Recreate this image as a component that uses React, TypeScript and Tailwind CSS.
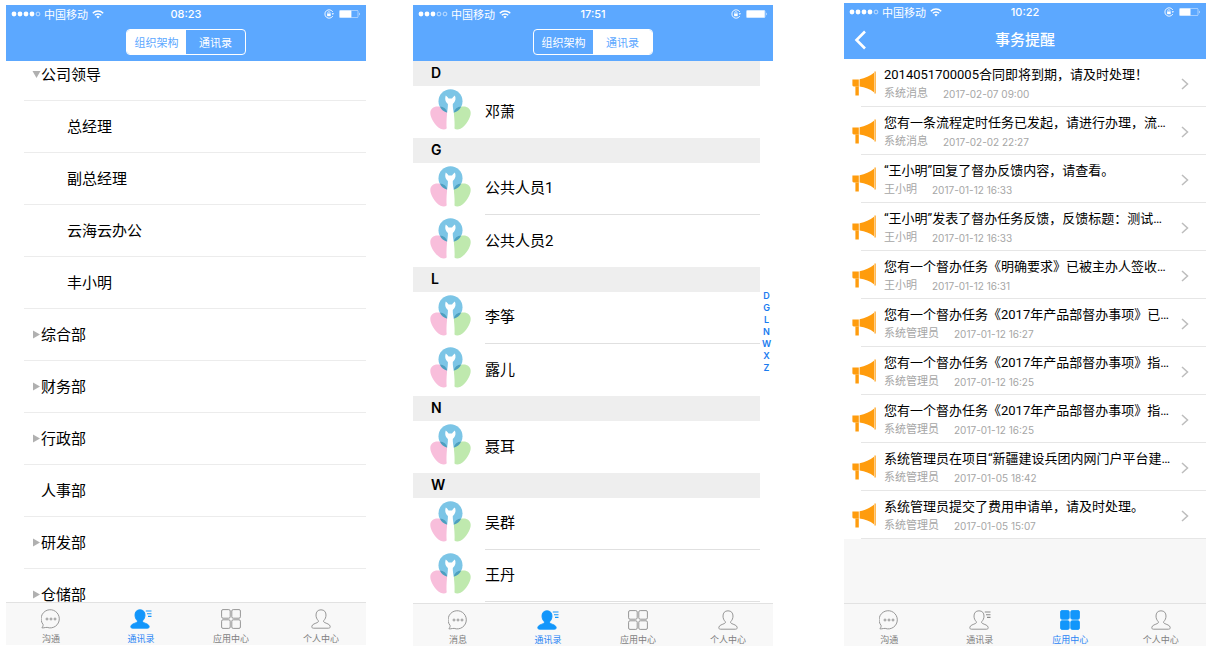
import React from 'react';
import clsx from 'clsx';

type TabId = 'chat' | 'contacts' | 'apps' | 'me';

const departments = [
  { name: '公司领导', kind: 'open' },
  { name: '总经理', kind: 'child' },
  { name: '副总经理', kind: 'child' },
  { name: '云海云办公', kind: 'child' },
  { name: '丰小明', kind: 'child' },
  { name: '综合部', kind: 'closed' },
  { name: '财务部', kind: 'closed' },
  { name: '行政部', kind: 'closed' },
  { name: '人事部', kind: 'leaf' },
  { name: '研发部', kind: 'closed' },
  { name: '仓储部', kind: 'closed' },
];

const contactGroups = [
  { letter: 'D', people: ['邓萧'] },
  { letter: 'G', people: ['公共人员1', '公共人员2'] },
  { letter: 'L', people: ['李筝', '露儿'] },
  { letter: 'N', people: ['聂耳'] },
  { letter: 'W', people: ['吴群', '王丹'] },
];

const indexLetters = ['D', 'G', 'L', 'N', 'W', 'X', 'Z'];

const reminders = [
  { title: '2014051700005合同即将到期，请及时处理！', from: '系统消息', time: '2017-02-07 09:00' },
  { title: '您有一条流程定时任务已发起，请进行办理，流…', from: '系统消息', time: '2017-02-02 22:27' },
  { title: '“王小明”回复了督办反馈内容，请查看。', from: '王小明', time: '2017-01-12 16:33' },
  { title: '“王小明”发表了督办任务反馈，反馈标题：测试…', from: '王小明', time: '2017-01-12 16:33' },
  { title: '您有一个督办任务《明确要求》已被主办人签收…', from: '王小明', time: '2017-01-12 16:31' },
  { title: '您有一个督办任务《2017年产品部督办事项》已…', from: '系统管理员', time: '2017-01-12 16:27' },
  { title: '您有一个督办任务《2017年产品部督办事项》指…', from: '系统管理员', time: '2017-01-12 16:25' },
  { title: '您有一个督办任务《2017年产品部督办事项》指…', from: '系统管理员', time: '2017-01-12 16:25' },
  { title: '系统管理员在项目“新疆建设兵团内网门户平台建…', from: '系统管理员', time: '2017-01-05 18:42' },
  { title: '系统管理员提交了费用申请单，请及时处理。', from: '系统管理员', time: '2017-01-05 15:07' },
];

const StatusBar: React.FC<{ time: string; signal: number; battery: number }> = ({ time, signal, battery }) => (
  <div className="grid h-[18px] grid-cols-[1fr_auto_1fr] items-center pl-[5px] pr-[5px] text-white">
    <div className="flex items-center gap-[2px]">
      <svg width="31" height="6" viewBox="0 0 31 6">
        {[0, 1, 2, 3, 4].map((i) => (
          <circle
            key={i}
            cx={3 + i * 6}
            cy="3"
            r={i < signal ? 2.4 : 1.9}
            fill={i < signal ? '#fff' : 'none'}
            stroke="#fff"
            strokeWidth={i < signal ? 0 : 0.6}
          />
        ))}
      </svg>
      <span className="font-['Noto_Sans_CJK_SC',sans-serif] text-[11px] leading-[18px]">中国移动</span>
      <svg className="ml-[2px]" width="12" height="9" viewBox="0 0 12 9" fill="none" stroke="#fff" strokeWidth="1.5">
        <path d="M0.8 3.2 C3.8 0.2 8.2 0.2 11.2 3.2" />
        <path d="M2.8 5.3 C4.6 3.5 7.4 3.5 9.2 5.3" />
        <path d="M4.3 6.7 C5.3 5.8 6.7 5.8 7.7 6.7 L6 8.6 Z" fill="#fff" stroke="none" />
      </svg>
    </div>
    <span className="font-['Inter','Roboto',sans-serif] text-[11px] font-medium leading-[18px]">{time}</span>
    <div className="flex items-center justify-end gap-[5px]">
      <svg width="10" height="10" viewBox="0 0 10 10" fill="none" stroke="#fff">
        <path d="M8.8 3 A4.2 4.2 0 1 0 8.8 7" strokeWidth="0.9" />
        <path d="M7.6 4.2 L10 4.2 L8.8 6 Z" fill="#fff" stroke="none" />
        <rect x="3.1" y="4.5" width="3.6" height="2.7" fill="#fff" stroke="none" />
        <path d="M3.8 4.6 V3.7 A1.1 1.1 0 0 1 6 3.7 V4.6" strokeWidth="0.7" />
      </svg>
      <svg width="22" height="8" viewBox="0 0 22 8">
        <rect x="0.4" y="0.4" width="18.6" height="7.2" rx="1" fill="none" stroke="#fff" strokeOpacity="0.7" strokeWidth="0.7" />
        <rect x="0.700" y="0.500" width={18 * battery} height="7" rx="0.500" fill="#fff" />
        <path d="M20 2.6 Q21.4 4 20 5.4 Z" fill="#fff" />
      </svg>
    </div>
  </div>
);

const Segmented: React.FC<{ active: number }> = ({ active }) => (
  <div className="flex h-[38px] items-center justify-center">
    <div className="flex h-[26px] w-[120px] overflow-hidden rounded-[4px] border border-white">
      {['组织架构', '通讯录'].map((label, i) => (
        <button
          key={label}
          type="button"
          className={clsx(
            "flex-1 font-['Noto_Sans_CJK_SC',sans-serif] text-[11px] leading-6",
            i === active ? 'bg-white text-[#5ca8ff]' : 'text-white',
          )}
        >
          {label}
        </button>
      ))}
    </div>
  </div>
);

const personPath =
  'M10 0.8 C13.3 0.8 15 3 15 6 C15 8.4 14.1 10.2 12.9 11.4 C12.4 12 12.5 13 13.3 13.4 C15.5 14.5 19.2 15.2 19.2 17.6 C19.2 18.7 18.6 19.2 17.6 19.2 H2.4 C1.4 19.2 0.8 18.7 0.8 17.6 C0.8 15.2 4.5 14.5 6.7 13.4 C7.5 13 7.6 12 7.1 11.4 C5.9 10.2 5 8.4 5 6 C5 3 6.7 0.8 10 0.8 Z';

const TabIcon: React.FC<{ id: TabId; active: boolean }> = ({ id, active }) => {
  const color = active ? '#1296fb' : '#8b8b8b';
  return (
    <svg
      width={id === 'contacts' ? 22 : 20}
      height="20"
      viewBox={id === 'contacts' ? '0 0 22 20' : '0 0 20 20'}
      fill={active ? color : 'none'}
      stroke={color}
      strokeWidth="0.9"
    >
      {id === 'chat' && (
        <>
          <path d="M2.8 18.8 C2 18.9 1.3 18.9 0.9 18.8 C1.8 17.8 2.2 16.7 2.1 15.5 A9.1 9.1 0 1 1 6.2 18.4 C5 18.3 4 18.6 2.8 18.8 Z" />
          <circle cx="6" cy="10" r="1" />
          <circle cx="10" cy="10" r="1" />
          <circle cx="14" cy="10" r="1" />
        </>
      )}
      {id === 'contacts' && (
        <>
          <path d={personPath} />
          <path d="M15.8 2 H21.5 M17 4.7 H21.5 M18 7.4 H21.5" strokeWidth="1.1" />
        </>
      )}
      {id === 'apps' &&
        [0.6, 10.8].map((x) =>
          [0.6, 10.8].map((y) => <rect key={`${x}-${y}`} x={x} y={y} width="8.6" height="8.6" rx="1.4" />),
        )}
      {id === 'me' && <path d={personPath} />}
    </svg>
  );
};

const TabBar: React.FC<{ active: TabId; first?: string }> = ({ active, first = '沟通' }) => {
  const tabs: { id: TabId; label: string }[] = [
    { id: 'chat', label: first },
    { id: 'contacts', label: '通讯录' },
    { id: 'apps', label: '应用中心' },
    { id: 'me', label: '个人中心' },
  ];
  return (
    <nav className="grid h-[43px] shrink-0 grid-cols-4 border-t border-[#e2e2e2] bg-[#f8f8f8]">
      {tabs.map((tab) => (
        <button
          key={tab.id}
          type="button"
          className={clsx(
            'flex flex-col items-center gap-1 pt-[6px] text-[9px] leading-3',
            tab.id === active ? 'text-[#2a85f5]' : 'text-[#7f7f7f]',
          )}
        >
          <TabIcon id={tab.id} active={tab.id === active} />
          <span>{tab.label}</span>
        </button>
      ))}
    </nav>
  );
};

const Avatar = () => (
  <svg className="shrink-0" width="41" height="41" viewBox="0 0 41 41">
    <circle cx="20.5" cy="12.2" r="12" fill="#7cc5e6" />
    <path d="M0.3 24 C0.3 19.5 4 17 8.500 17.500 C14 18 17.500 21 17.500 26 L18 36 C18 40.500 14 41.500 10.500 39.800 C5 36.500 0.300 29 0.300 24 Z" fill="#f8bedb" />
    <path d="M40.700 24 C40.700 19.500 37 17 32.500 17.500 C27 18 23.500 21 23.500 26 L23 36 C23 40.500 27 41.500 30.500 39.800 C36 36.500 40.700 29 40.700 24 Z" fill="#bfe9ae" />
    {/* where the petals cross the ring */}
    <path d="M9.800 17.600 C13.8 18 16.6 20 17.4 23.8 C13.8 22.9 11.200 20.800 9.800 17.600 Z" fill="#4b9fc0" />
    <path d="M31.200 17.600 C27.2 18 24.4 20 23.6 23.8 C27.2 22.9 29.800 20.800 31.200 17.600 Z" fill="#4b9fc0" />
    <path d="M15.8 6.6 C17 7.4 18 8.6 18.6 9.6 H22 C22.600 8.600 23.600 7.400 24.900 6.600 C26.100 9.500 25.700 12.600 22.800 15 C22.600 18 23.400 21 23.900 25 C24.500 30 24.900 36 24.400 40.500 H16.800 C16.200 36 16.500 30 17 25 C17.400 21 18 18 17.900 15 C15 12.600 14.800 9.500 15.800 6.600 Z" fill="#fff" />
  </svg>
);

const Megaphone = () => (
  <svg className="shrink-0" width="24" height="26" viewBox="0 0 24 26" fill="#ff9c0d">
    <path d="M0.4 8.6 H6.8 V15.4 H1.8 C0.9 15.4 0.4 14.9 0.4 14 Z" />
    <path d="M3.4 15.4 H6.8 V24.5 H3.4 Z" />
    <path d="M7.600 8.200 C13 7.200 18 5 22 1.800 V21.2 C18 18.300 13 16.200 7.600 15.600 Z" />
    <path d="M22.5 0.5 H23.7 V22.5 H22.5 Z" />
  </svg>
);

const OrgScreen = () => (
  <section className="mt-[5px] mb-[10px] flex min-w-0 flex-[360] flex-col">
    <header className="shrink-0 bg-[#5ca8ff]">
      <StatusBar time="08:23" signal={4} battery={0.65} />
      <Segmented active={0} />
    </header>
    <div className="min-h-0 flex-1 overflow-hidden">
      {/* list is scrolled a little under the header */}
      <ul className="-mt-3">
        {departments.map((d) => (
          <li
            key={d.name}
            className={clsx(
              'ml-[18px] flex h-[52px] items-center border-b border-[#ececec] text-[15px] leading-5 text-black',
              d.kind === 'child' ? 'pl-[43px]' : 'pl-2',
            )}
          >
            {d.kind !== 'child' && (
              <svg width="9" height="9" viewBox="0 0 9 9" fill="#b0b0b0">
                {d.kind === 'open' && <path d="M0.5 1 H8.5 L4.5 8 Z" />}
                {d.kind === 'closed' && <path d="M1 0.5 L8 4.5 L1 8.5 Z" />}
              </svg>
            )}
            <span>{d.name}</span>
          </li>
        ))}
      </ul>
    </div>
    <TabBar active="contacts" />
  </section>
);

const ContactsScreen = () => (
  <section className="mt-[5px] mb-[9px] ml-[47px] flex min-w-0 flex-[360] flex-col">
    <header className="shrink-0 bg-[#5ca8ff]">
      <StatusBar time="17:51" signal={3} battery={1} />
      <Segmented active={1} />
    </header>
    <div className="flex min-h-0 flex-1 overflow-hidden">
      <div className="flex-1">
        {contactGroups.map((group) => (
          <div key={group.letter} id={`group-${group.letter}`}>
            <h2 className="h-[25px] bg-[#eeeeee] pl-[18px] font-['Inter','Roboto',sans-serif] text-[14px] font-semibold leading-6 text-black">
              {group.letter}
            </h2>
            <ul>
              {group.people.map((name, i) => (
                <li key={name} className="flex h-[52px] gap-[14px] pl-[17px] pt-[3px]">
                  <Avatar />
                  <span
                    className={clsx(
                      'flex flex-1 items-center pb-1 text-[15px] leading-5 text-black',
                      (i < group.people.length - 1 || group.letter === 'W') && 'border-b border-[#e0e0e0]',
                    )}
                  >
                    {name}
                  </span>
                </li>
              ))}
            </ul>
          </div>
        ))}
      </div>
      <nav className="flex w-[13px] flex-col items-center justify-center font-['Inter','Roboto',sans-serif] text-[9px] font-semibold leading-3 text-[#1a7cf0]">
        {indexLetters.map((letter) => (
          <a key={letter} href={`#group-${letter}`}>
            {letter}
          </a>
        ))}
      </nav>
    </div>
    <TabBar active="contacts" first="消息" />
  </section>
);

const RemindersScreen = () => (
  <section className="mt-[3px] mb-[9px] ml-[71px] flex min-w-0 flex-[362] flex-col bg-[#f7f7f7]">
    <header className="shrink-0 bg-[#5ca8ff] text-white">
      <StatusBar time="10:22" signal={4} battery={0.6} />
      <div className="grid h-[38px] grid-cols-[1fr_auto_1fr] items-center">
        <button type="button" aria-label="返回" className="pl-[10px]">
          <svg width="13" height="20" viewBox="0 0 13 20" fill="none" stroke="#fff" strokeWidth="2.6">
            <path d="M11 1.5 L2.5 10 L11 18.5" />
          </svg>
        </button>
        <h1 className="text-[15px] font-medium leading-5">事务提醒</h1>
      </div>
    </header>
    <div className="min-h-0 flex-1 overflow-hidden">
      <ul className="bg-white">
        {reminders.map((r, i) => (
          <li key={i}>
            <a href="#reminder" className="flex h-[47px] items-center pl-2 pr-[17px] pt-[2px]">
              <Megaphone />
              <div className="ml-2 min-w-0 flex-1">
                <p className="whitespace-nowrap text-[13px] leading-5 text-black">{r.title}</p>
                <p className="flex gap-[15px] text-[11px] leading-[18px] text-[#a6a6a6]">
                  <span>{r.from}</span>
                  <span className="font-['Inter','Roboto',sans-serif] text-[10px]">{r.time}</span>
                </p>
              </div>
              <svg width="8" height="12" viewBox="0 0 8 12" fill="none" stroke="#bdbdbd" strokeWidth="1.5">
                <path d="M1 1 L6.5 6 L1 11" />
              </svg>
            </a>
            <div className="ml-[17px] h-px bg-[#e6e6e6]" />
          </li>
        ))}
      </ul>
    </div>
    <TabBar active="apps" />
  </section>
);

const App: React.FC = () => {
  return (
    <main className="flex h-screen bg-white pl-[6px] pr-[9px] font-['Roboto','Noto_Sans_CJK_SC',sans-serif]">
      <OrgScreen />
      <ContactsScreen />
      <RemindersScreen />
    </main>
  );
};

export default App;
